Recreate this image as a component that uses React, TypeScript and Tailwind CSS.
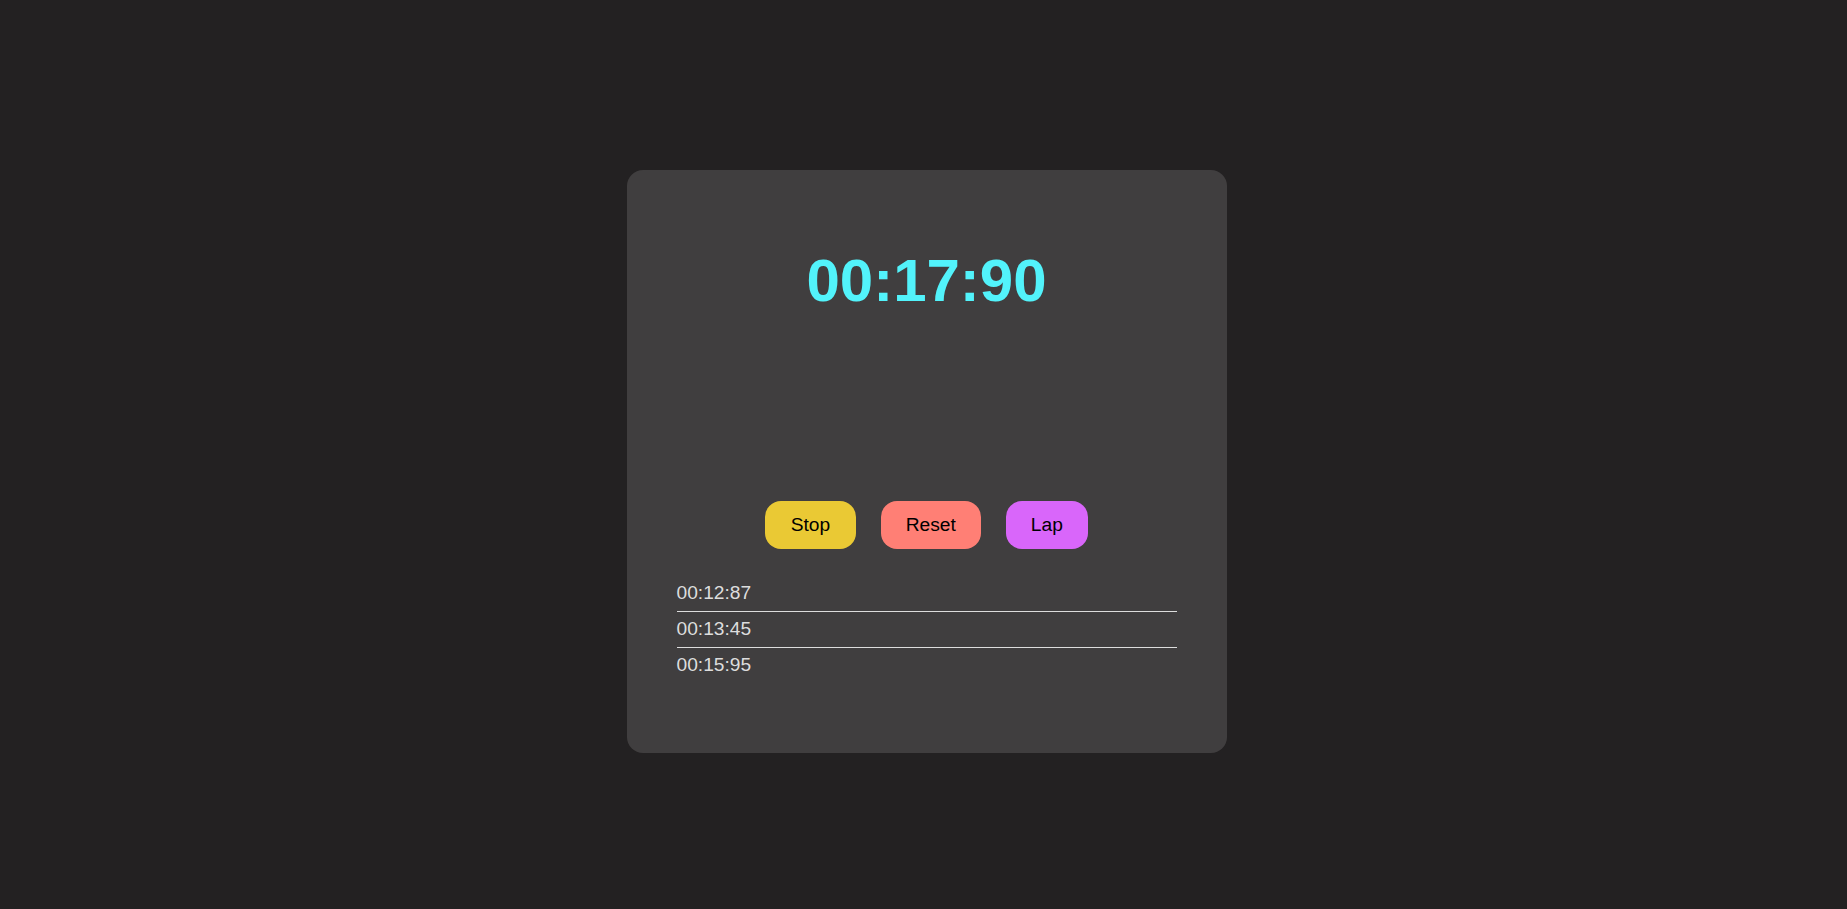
import React from "react";

export default function App() {
  const laps = ["00:12:87", "00:13:45", "00:15:95"];
  return (
    <div
      className="min-h-screen w-full bg-[#232122] flex justify-center pl-[6px] pt-[170px]"
      style={{ fontFamily: '"Liberation Sans", Arial, sans-serif' }}
    >
      <div className="w-[600px] h-[583px] bg-[#403e3f] rounded-[16px] px-[50px] pt-[76px] flex flex-col items-center">
        <div className="text-[60px] leading-[69px] font-bold text-[#52f3fb]">00:17:90</div>
        <div className="mt-[186px] flex gap-[25px]">
          <button className="bg-[#eac934] text-black text-[19.2px] leading-[22px] pl-[25.5px] pr-[25.5px] py-[13px] rounded-[16px]">
            Stop
          </button>
          <button className="bg-[#ff7f75] text-black text-[19.2px] leading-[22px] px-[25px] py-[13px] rounded-[16px]">
            Reset
          </button>
          <button className="bg-[#d966fa] text-black text-[19.2px] leading-[22px] px-[25px] py-[13px] rounded-[16px]">
            Lap
          </button>
        </div>
        <ul className="mt-[27px] w-[500px]">
          {laps.map((l, i) => (
            <li
              key={l}
              className={
                "text-[19.2px] leading-[21.4px] text-[#dddddd] pt-[6px] pb-[7.6px] " +
                (i < laps.length - 1 ? "border-b border-[#dddddd]" : "")
              }
            >
              {l}
            </li>
          ))}
        </ul>
      </div>
    </div>
  );
}
